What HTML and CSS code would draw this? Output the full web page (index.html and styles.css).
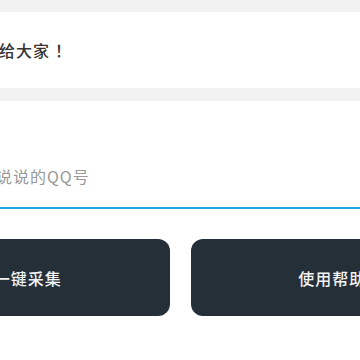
FILE: index.html
```html
<!DOCTYPE html>
<html lang="zh-CN">
<head>
    <meta charset="UTF-8">
    <meta name="viewport" content="width=device-width, initial-scale=1.0">
    <title>说说采集</title>
    <link rel="stylesheet" href="styles.css">
</head>
<body>

    <div class="page">
        <div class="notice">
            <div class="notice-box">快把说说分享给大家<span class="bang">！</span></div>
        </div>

        <div class="form">
            <input class="qq-input" type="text" placeholder="请输入要采集说说的QQ号">
            <div class="actions">
                <button class="btn">一键采集</button>
                <button class="btn">使用帮助</button>
            </div>
        </div>
    </div>

</body>
</html>
```

FILE: styles.css
```css
* { box-sizing: border-box; margin: 0; padding: 0; }
body {
    font-family: "Noto Sans CJK SC", "Noto Sans", sans-serif;
    background: #fff;
    overflow: hidden;
    width: 360px;
    height: 360px;
}

.page {
    width: 608px;
    margin-left: -124px;
}

.notice {
    background: #f2f2f2;
    padding: 12px 0 13px;
}

.notice-box {
    background: #fff;
    height: 76px;
    display: flex;
    align-items: center;
    padding-left: 21px;
    font-size: 16px;
    letter-spacing: 1px;
    font-weight: 500;
    color: #333;
}

.bang { margin-left: 5px; }

.form { padding: 44px 10px 0; }

.qq-input {
    display: block;
    width: 100%;
    height: 64px;
    border: none;
    border-bottom: 2px solid #22a6e3;
    outline: none;
    padding: 0 8px;
    font-family: inherit;
    font-size: 16px;
    letter-spacing: 1px;
    color: #333;
    background: transparent;
}

.qq-input::placeholder { color: #999; }

.actions {
    display: flex;
    gap: 21px;
    margin-top: 30px;
}

.btn {
    flex: 1;
    height: 77px;
    border: none;
    border-radius: 12px;
    background: #252f38;
    color: #f2f2f2;
    font-family: inherit;
    font-size: 16px;
    letter-spacing: 1px;
    font-weight: 500;
    cursor: pointer;
}
```
